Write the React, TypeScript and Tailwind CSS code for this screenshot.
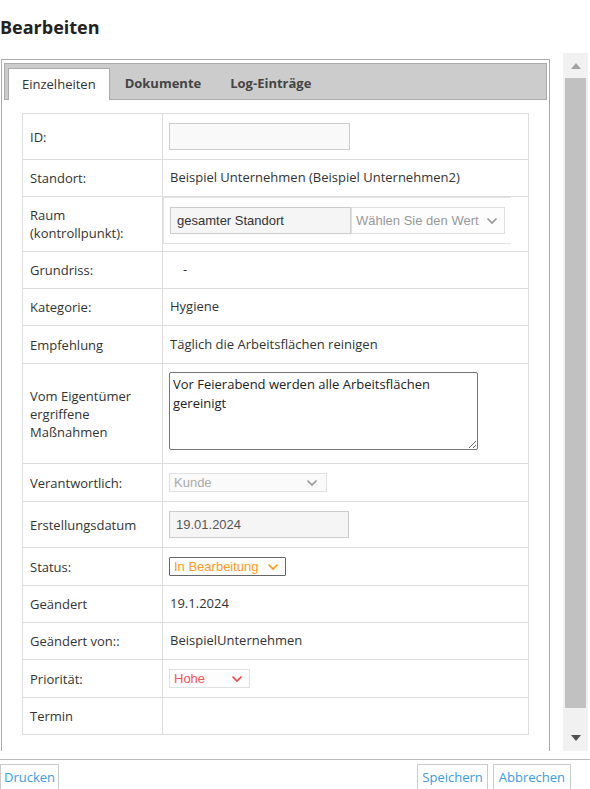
import React from "react";

const Chevron = ({ color }: { color: string }) => (
  <svg width="12" height="8" viewBox="0 0 12 8" className="shrink-0">
    <polyline points="1.5,1.5 6,6 10.5,1.5" fill="none" stroke={color} strokeWidth="1.7" />
  </svg>
);

const Row = ({
  label,
  h,
  children,
  top = false,
}: {
  label: React.ReactNode;
  h: string;
  children?: React.ReactNode;
  top?: boolean;
}) => (
  <div className={`grid grid-cols-[140px_1fr] border-t border-[#dddddd] ${h}`}>
    <div className="flex items-center border-r border-[#dddddd] px-[7px] leading-[18px]">{label}</div>
    <div className={`flex ${top ? "items-start" : "items-center"} pl-[6px] pr-[7px]`}>{children}</div>
  </div>
);

const arial = "font-['Liberation_Sans',Arial,sans-serif]";

const App = () => {
  return (
    <div className="relative h-[789px] w-[590px] overflow-hidden bg-white font-['Open_Sans',sans-serif] text-[13px] text-[#333]">
      <div className="h-[53px]">
        <h1 className="pt-[15px] text-[18px] font-bold leading-[24px] text-[#222]">Bearbeiten</h1>
      </div>

      <div className="flex items-start">
        {/* frame */}
        <div className="ml-[1px] mt-[6px] h-[692px] w-[549px] border-l border-r border-t border-[#aaaaaa] px-[2px] pt-[3px]">
          <div className="flex h-[37px] items-end border border-[#aaaaaa] bg-[#cccccc] pl-[3px]">
            <div className="-mb-px flex h-[32px] items-center border border-b-0 border-[#aaaaaa] bg-white px-[13px] text-[#333]">
              Einzelheiten
            </div>
            <div className="ml-[2px] flex h-[31px] items-center px-[13px] font-bold text-[#444]">Dokumente</div>
            <div className="ml-[2px] flex h-[31px] items-center px-[14px] font-bold text-[#444]">Log-Einträge</div>
          </div>

          <div className="px-[18px] pt-[13px]">
            <div className="border-b border-l border-r border-[#dddddd]">
              <Row label="ID:" h="h-[46px]">
                <input
                  readOnly
                  className="h-[27px] w-[181px] border border-[#cccccc] bg-[#f9f9f9] px-[6px] outline-none"
                />
              </Row>
              <Row label="Standort:" h="h-[37px]">
                <span className="pl-[1px]">Beispiel Unternehmen (Beispiel Unternehmen2)</span>
              </Row>
              <Row
                label={
                  <span>
                    Raum
                    <br />
                    (kontrollpunkt):
                  </span>
                }
                h="h-[55px]"
                top
              >
                <div className="-ml-[6px] flex h-[47px] w-[348px] items-start border-b border-l border-t border-[#e3e3e3] pl-[6px] pt-[9px]">
                  <input
                    readOnly
                    value="gesamter Standort"
                    className={`h-[27px] w-[181px] border border-[#cccccc] bg-[#f5f5f5] px-[6px] text-[#333] outline-none ${arial}`}
                  />
                  <div
                    className={`flex h-[27px] w-[154px] items-center justify-between border border-[#e0e0e0] bg-[#fdfdfd] pl-[4px] pr-[6px] text-[#999] ${arial}`}
                  >
                    <span>Wählen Sie den Wert</span>
                    <Chevron color="#999" />
                  </div>
                </div>
              </Row>
              <Row label="Grundriss:" h="h-[37px]">
                <span className="pl-[14px]">-</span>
              </Row>
              <Row label="Kategorie:" h="h-[37px]">
                <span className="pl-[1px]">Hygiene</span>
              </Row>
              <Row label="Empfehlung" h="h-[38px]">
                <span className="pl-[1px]">Täglich die Arbeitsflächen reinigen</span>
              </Row>
              <Row
                label={
                  <span>
                    Vom Eigentümer
                    <br />
                    ergriffene
                    <br />
                    Maßnahmen
                  </span>
                }
                h="h-[100px]"
                top
              >
                <textarea
                  readOnly
                  defaultValue="Vor Feierabend werden alle Arbeitsflächen gereinigt"
                  className="mt-[8px] h-[78px] w-[309px] rounded-[2px] border border-[#767676] px-[3px] py-[2px] text-[13px] leading-[19px] text-[#222] outline-none"
                />
              </Row>
              <Row label="Verantwortlich:" h="h-[38px]">
                <div
                  className={`flex h-[19px] w-[158px] items-center justify-between border border-[#e0e0e0] bg-[#fafafa] pl-[4px] pr-[8px] text-[#aaa] ${arial}`}
                >
                  <span>Kunde</span>
                  <Chevron color="#999" />
                </div>
              </Row>
              <Row label="Erstellungsdatum" h="h-[46px]">
                <input
                  readOnly
                  value="19.01.2024"
                  className={`h-[27px] w-[180px] border border-[#cccccc] bg-[#f5f5f5] px-[6px] text-[#555] outline-none ${arial}`}
                />
              </Row>
              <Row label="Status:" h="h-[38px]">
                <div
                  className={`flex h-[19px] w-[117px] items-center justify-between rounded-[1px] border border-[#666] bg-white pl-[4px] pr-[6px] text-[#ff9a1a] ${arial}`}
                >
                  <span>In Bearbeitung</span>
                  <Chevron color="#ff9a1a" />
                </div>
              </Row>
              <Row label="Geändert" h="h-[37px]">
                <span className="pl-[1px]">19.1.2024</span>
              </Row>
              <Row label="Geändert von::" h="h-[37px]">
                <span className="pl-[1px]">BeispielUnternehmen</span>
              </Row>
              <Row label="Priorität:" h="h-[38px]">
                <div
                  className={`flex h-[19px] w-[81px] items-center justify-between border border-[#e0e0e0] bg-[#fdfdfd] pl-[4px] pr-[6px] text-[#f55555] ${arial}`}
                >
                  <span>Hohe</span>
                  <Chevron color="#f04848" />
                </div>
              </Row>
              <Row label="Termin" h="h-[37px]" />
            </div>
          </div>
        </div>

        {/* scrollbar */}
        <div className="ml-[13px] flex h-[698px] w-[25px] flex-col items-center bg-[#f1f1f1]">
          <div className="flex h-[25px] items-center justify-center">
            <svg width="10" height="6" viewBox="0 0 10 6">
              <polygon points="0,6 10,6 5,0" fill="#a3a3a3" />
            </svg>
          </div>
          <div className="h-[630px] w-[21px] bg-[#c1c1c1]" />
          <div className="flex-1" />
          <div className="flex h-[26px] items-center justify-center">
            <svg width="10" height="6" viewBox="0 0 10 6">
              <polygon points="0,0 10,0 5,6" fill="#505050" />
            </svg>
          </div>
        </div>
      </div>

      {/* footer */}
      <div className="mt-[8px] flex border-t border-[#bbbbbb] pt-[4px] pr-[19px]">
        <button className="h-[27px] border border-[#cccccc] bg-white px-[3px] text-[#3c9ce0]">Drucken</button>
        <div className="ml-auto flex gap-[5px]">
          <button className="h-[27px] border border-[#cccccc] bg-white px-[4px] text-[#3c9ce0]">Speichern</button>
          <button className="h-[27px] border border-[#cccccc] bg-white px-[5px] text-[#3c9ce0]">Abbrechen</button>
        </div>
      </div>
    </div>
  );
};

export default App;
